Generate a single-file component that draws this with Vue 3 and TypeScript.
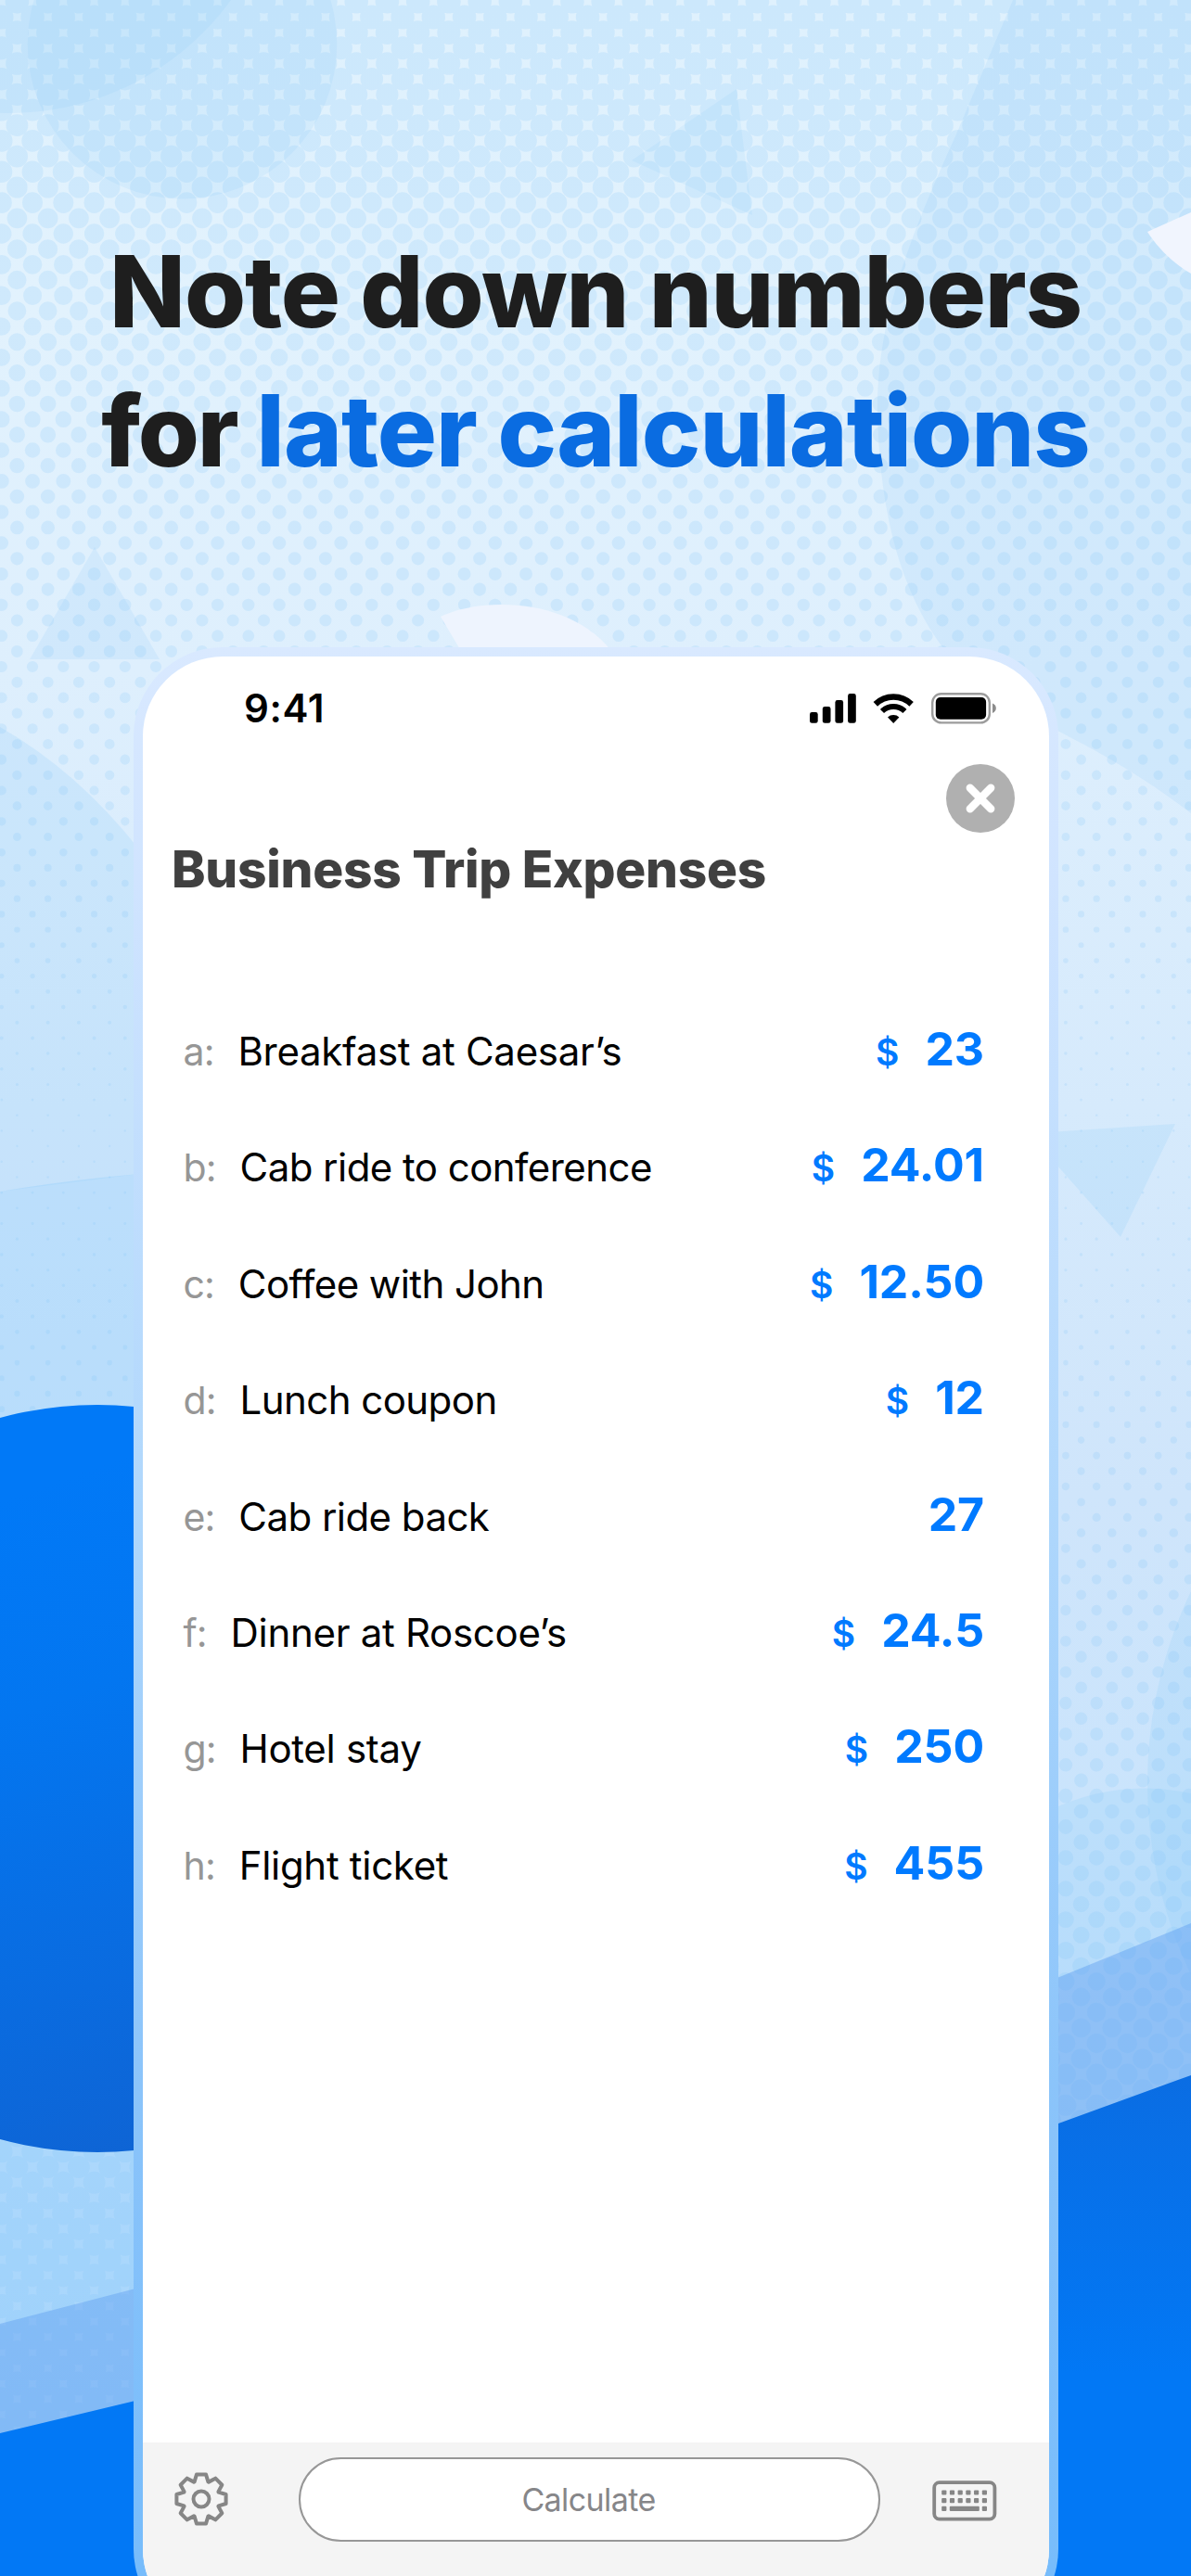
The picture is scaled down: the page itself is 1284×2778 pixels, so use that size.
<script setup lang="ts">
interface Expense {
  key: string
  label: string
  currency?: string
  amount: string
  loose?: boolean
}

const expenses: Expense[] = [
  { key: 'a', label: 'Breakfast at Caesar’s', currency: '$', amount: '23', loose: true },
  { key: 'b', label: 'Cab ride to conference', currency: '$', amount: '24.01' },
  { key: 'c', label: 'Coffee with John', currency: '$', amount: '12.50' },
  { key: 'd', label: 'Lunch coupon', currency: '$', amount: '12' },
  { key: 'e', label: 'Cab ride back', amount: '27' },
  { key: 'f', label: 'Dinner at Roscoe’s', currency: '$', amount: '24.5', loose: true },
  { key: 'g', label: 'Hotel stay', currency: '$', amount: '250', loose: true },
  { key: 'h', label: 'Flight ticket', currency: '$', amount: '455', loose: true },
]

// Halftone: dot radius by height, interpolated between these stops
const radiusStops: [number, number][] = [
  [0, 12.8], [150, 11.8], [220, 11], [600, 7.1], [855, 5], [980, 3.5],
  [1100, 2], [1230, 1.1], [1400, 1.8], [1500, 3], [1600, 4.2], [1700, 5.2],
  [1900, 7.2], [2100, 9.2], [2280, 11.6], [2500, 12.7], [2800, 13.8],
]

function dotRadius(y: number): number {
  for (let i = 1; i < radiusStops.length; i++) {
    const [y1, r1] = radiusStops[i]
    if (y <= y1) {
      const [y0, r0] = radiusStops[i - 1]
      return r0 + ((r1 - r0) * (y - y0)) / (y1 - y0)
    }
  }
  return 13.8
}

function halftonePath(): string {
  const colPitch = 33.25
  const rowPitch = 16.68
  let d = ''
  for (let row = 0; row < 168; row++) {
    const y = 1.8 + row * rowPitch
    const r = dotRadius(y)
    const start = row % 2 === 0 ? 18.4 - colPitch : 1.8
    for (let x = start; x < 1310; x += colPitch) {
      d += `M${(x - r).toFixed(1)} ${y.toFixed(1)}a${r.toFixed(2)} ${r.toFixed(2)} 0 1 0 ${(2 * r).toFixed(2)} 0a${r.toFixed(2)} ${r.toFixed(2)} 0 1 0 ${(-2 * r).toFixed(2)} 0z`
    }
  }
  return d
}

const dots = halftonePath()

// Eight-tooth gear outline centred on the origin
function gearPath(): string {
  const tooth = [[-7.4, -18.6], [-5, -26.6], [5, -26.6], [7.4, -18.6]]
  const pts: string[] = []
  for (let i = 0; i < 8; i++) {
    const a = (i * Math.PI) / 4
    for (const [x, y] of tooth) {
      const px = x * Math.cos(a) - y * Math.sin(a)
      const py = x * Math.sin(a) + y * Math.cos(a)
      pts.push(`${px.toFixed(2)} ${py.toFixed(2)}`)
    }
  }
  return `M${pts.join('L')}Z`
}

const gear = gearPath()
const keyColumns = [12.8, 21.5, 30.2, 38.9, 47.6, 56.4]
</script>

<template>
  <main class="page">
    <svg class="backdrop" viewBox="0 0 1284 2778" width="1284" height="2778" aria-hidden="true">
      <defs>
        <linearGradient id="sky" x1="0" y1="0" x2="0" y2="1">
          <stop offset="0" stop-color="#dff1fd" />
          <stop offset=".12" stop-color="#e2f2fd" />
          <stop offset=".26" stop-color="#deeffd" />
          <stop offset=".43" stop-color="#d6eafc" />
          <stop offset=".58" stop-color="#cfe5fb" />
          <stop offset=".7" stop-color="#cae4fc" />
          <stop offset=".86" stop-color="#bcdefc" />
          <stop offset="1" stop-color="#b2d8fc" />
        </linearGradient>
        <linearGradient id="ball" gradientUnits="userSpaceOnUse" x1="-60" y1="1640" x2="190" y2="2340">
          <stop offset="0" stop-color="#0179f7" />
          <stop offset=".3" stop-color="#0376f0" />
          <stop offset="1" stop-color="#0f63d3" />
        </linearGradient>
        <linearGradient id="hill" gradientUnits="userSpaceOnUse" x1="0" y1="2240" x2="0" y2="2560">
          <stop offset="0" stop-color="#0a6de3" />
          <stop offset="1" stop-color="#0278f5" />
        </linearGradient>
      </defs>
      <rect width="1284" height="2778" fill="url(#sky)" />
      <g fill="#8cccfb">
        <circle cx="196.5" cy="47.6" r="166.8" fill-opacity=".15" />
        <circle cx="10" cy="-173" r="295" fill-opacity=".15" />
        <path d="M794 96L681 173L811 232Z" fill-opacity=".14" />
        <path d="M1092 0L1030 147C975 268 946 350 946 440C948 590 990 700 1080 757C1120 780 1200 812 1284 877V0Z" fill-opacity=".17" />
        <path d="M102 590L32 711H172Z" fill-opacity=".17" />
        <path d="M0 784Q84 832 150 916V1266L0 1285Z" fill-opacity=".21" />
        <path d="M0 1285Q70 1273 150 1266V2640H0Z" fill-opacity=".35" />
        <path d="M1100 1223L1267 1212L1208 1334L1100 1212Z" fill-opacity=".2" />
        <path d="M1130 1953Q1205 1917 1284 1934V2300H1130Z" fill-opacity=".22" />
        <circle cx="1716" cy="1923" r="479" fill-opacity=".2" />
      </g>
      <path :d="dots" fill="#7cc4fb" fill-opacity=".18" />
      <path d="M0 2506L150 2467V2640H0Z" fill="#4f94ee" fill-opacity=".36" />
      <path d="M1130 2137L1284 2074V2260L1130 2300Z" fill="#4f94ee" fill-opacity=".38" />
      <path d="M1237 250L1284 229V295Q1255 278 1237 250Z" fill="#f1f5fe" />
      <path d="M475 665C520 643 615 645 659 702H497Z" fill="#eef4fe" />
      <circle cx="105" cy="1918" r="403" fill="url(#ball)" />
      <path d="M0 2624L150 2588L1130 2294L1284 2238V2778H0Z" fill="url(#hill)" />
    </svg>

    <h1 class="headline">
      <span class="line">Note down numbers</span>
      <span class="line"><span class="lead">for </span><em>later calculations</em></span>
    </h1>

    <section class="phone">
      <div class="screen">
        <header class="status">
          <span class="time">9:41</span>
          <svg class="signals" width="202" height="36" viewBox="0 0 202 36" aria-label="Signal, Wi-Fi and battery">
            <rect x="1" y="21" width="8.7" height="11.8" rx="2.4" />
            <rect x="14.8" y="15" width="8.7" height="17.8" rx="2.4" />
            <rect x="28.4" y="8" width="8.7" height="24.8" rx="2.4" />
            <rect x="42.1" y="1" width="8.7" height="31.8" rx="2.4" />
            <g fill="none" stroke="#000">
              <path d="M71.8 12.4A27.8 27.8 0 0 1 110.6 12.4" stroke-width="6.4" />
              <path d="M79 20A17.4 17.4 0 0 1 103.4 20" stroke-width="5.8" />
            </g>
            <path d="M91.2 32.9L85 26.4A9 9 0 0 1 97.4 26.4Z" />
            <rect x="133.2" y="1.2" width="61.6" height="31.2" rx="9.5" fill="none" stroke="#9c9c9c" stroke-width="2.4" />
            <rect x="136.8" y="5.1" width="54.3" height="23.6" rx="5" />
            <path d="M198 11.6Q201.8 13.2 201.8 16.8T198 22Z" fill="#8c8c8c" />
          </svg>
        </header>

        <div class="close-row">
          <svg class="close" width="74" height="74" viewBox="0 0 74 74" aria-label="Close">
            <circle cx="37" cy="37" r="37" fill="#b0b0b0" />
            <path d="M25.8 25.8L48.2 48.2M48.2 25.8L25.8 48.2" stroke="#fff" stroke-width="8.4" stroke-linecap="round" />
          </svg>
        </div>

        <h2 class="title">Business Trip Expenses</h2>

        <ul class="list">
          <li v-for="item in expenses" :key="item.key" class="row">
            <span class="key">{{ item.key }}:</span>
            <span class="label" :class="{ loose: item.loose }">{{ item.label }}</span>
            <span v-if="item.currency" class="currency">{{ item.currency }}</span>
            <span class="amount">{{ item.amount }}</span>
          </li>
        </ul>

        <footer class="toolbar">
          <svg class="gear" width="60" height="60" viewBox="-30 -30 60 60" fill="none" stroke="#868686" stroke-width="4" stroke-linejoin="round" aria-label="Settings">
            <path :d="gear" />
            <circle r="8.5" />
          </svg>
          <div class="calculate">Calculate</div>
          <svg class="keyboard" width="70" height="44" viewBox="0 0 70 44" fill="#868686" aria-label="Keyboard">
            <rect x="2.2" y="2.2" width="65.2" height="39.4" rx="5.5" fill="none" stroke="#868686" stroke-width="3.8" />
            <template v-for="x in keyColumns" :key="x">
              <rect :x="x - 2.6" y="10.4" width="5.2" height="5.2" rx="1" />
              <rect :x="x - 2.6" y="19" width="5.2" height="5.2" rx="1" />
            </template>
            <rect x="10.2" y="27.8" width="5.2" height="5.2" rx="1" />
            <rect x="18.8" y="27.8" width="32" height="5.2" rx="1" />
            <rect x="53.8" y="27.8" width="5.2" height="5.2" rx="1" />
          </svg>
        </footer>
      </div>
    </section>
  </main>
</template>

<style>
body {
  margin: 0;
}
</style>

<style scoped>
.page {
  position: relative;
  box-sizing: border-box;
  width: 1284px;
  height: 2778px;
  padding-top: 239px;
  overflow: hidden;
  background: #d4e9fc;
  font-family: Inter, "Liberation Sans", sans-serif;
}

.backdrop {
  position: absolute;
  inset: 0;
}

.headline {
  position: relative;
  height: 459px;
  margin: 0;
  color: #1e1e1e;
  font-size: 107px;
  font-weight: 800;
  line-height: 150px;
  letter-spacing: -1.1px;
  text-align: center;
  white-space: nowrap;
}

.line {
  display: block;
}

.lead {
  letter-spacing: -2.3px;
}

.headline em {
  color: #0a6ce1;
  font-style: normal;
  letter-spacing: -0.95px;
}

.phone {
  position: relative;
  box-sizing: border-box;
  width: 997px;
  height: 2147px;
  margin-left: 144px;
  padding: 10px;
  border-radius: 96px;
  background: linear-gradient(#d9e9ff 0, #d0e4ff 250px, #afd7fc 930px, #8bc4fa 1550px, #77bcfb 2070px);
}

.screen {
  display: flex;
  flex-direction: column;
  height: 2127px;
  border-radius: 86px;
  overflow: hidden;
  background: #fff;
}

.status {
  display: flex;
  justify-content: space-between;
  align-items: flex-start;
  height: 76px;
  padding: 39px 57px 0 109px;
  box-sizing: border-box;
}

.time {
  margin-top: -8px;
  font-size: 42px;
  font-weight: 600;
  line-height: 50px;
  letter-spacing: 0.6px;
}

.close-row {
  display: flex;
  justify-content: flex-end;
  height: 114px;
  padding: 40px 37px 0 0;
  box-sizing: border-box;
}

.title {
  height: 171px;
  margin: 0 0 0 31px;
  color: #404040;
  font-size: 55px;
  font-weight: 800;
  line-height: 78px;
  letter-spacing: -0.28px;
  white-space: nowrap;
}

.list {
  flex: none;
  height: 1564.5px;
  margin: 0;
  padding: 0 70px 0 43.5px;
  list-style: none;
  box-sizing: border-box;
}

.row {
  display: flex;
  align-items: baseline;
  height: 125.4px;
  line-height: 125.4px;
  white-space: nowrap;
}

.key {
  color: #969696;
  font-size: 41px;
  letter-spacing: -0.8px;
}

.label {
  flex: 1;
  margin-left: 25.7px;
  font-size: 42px;
  letter-spacing: -0.55px;
}

.label.loose {
  letter-spacing: -0.3px;
}

.currency,
.amount {
  color: #007aff;
}

.currency {
  margin-right: 28px;
  font-size: 39px;
  font-weight: 600;
}

.amount {
  font-size: 50px;
  font-weight: 700;
  letter-spacing: -0.1px;
}

.toolbar {
  display: flex;
  align-items: flex-start;
  flex: 1;
  background: #f4f4f4;
}

.gear {
  margin: 31.5px 0 0 32.5px;
}

.calculate {
  box-sizing: border-box;
  width: 627px;
  height: 91px;
  margin: 16.5px 0 0 75.5px;
  border: 2px solid #979797;
  border-radius: 46px;
  background: #fff;
  color: #868689;
  font-size: 34px;
  line-height: 87px;
  letter-spacing: -0.6px;
  text-indent: -2px;
  text-align: center;
}

.keyboard {
  margin: 41px 0 0 56px;
}
</style>
